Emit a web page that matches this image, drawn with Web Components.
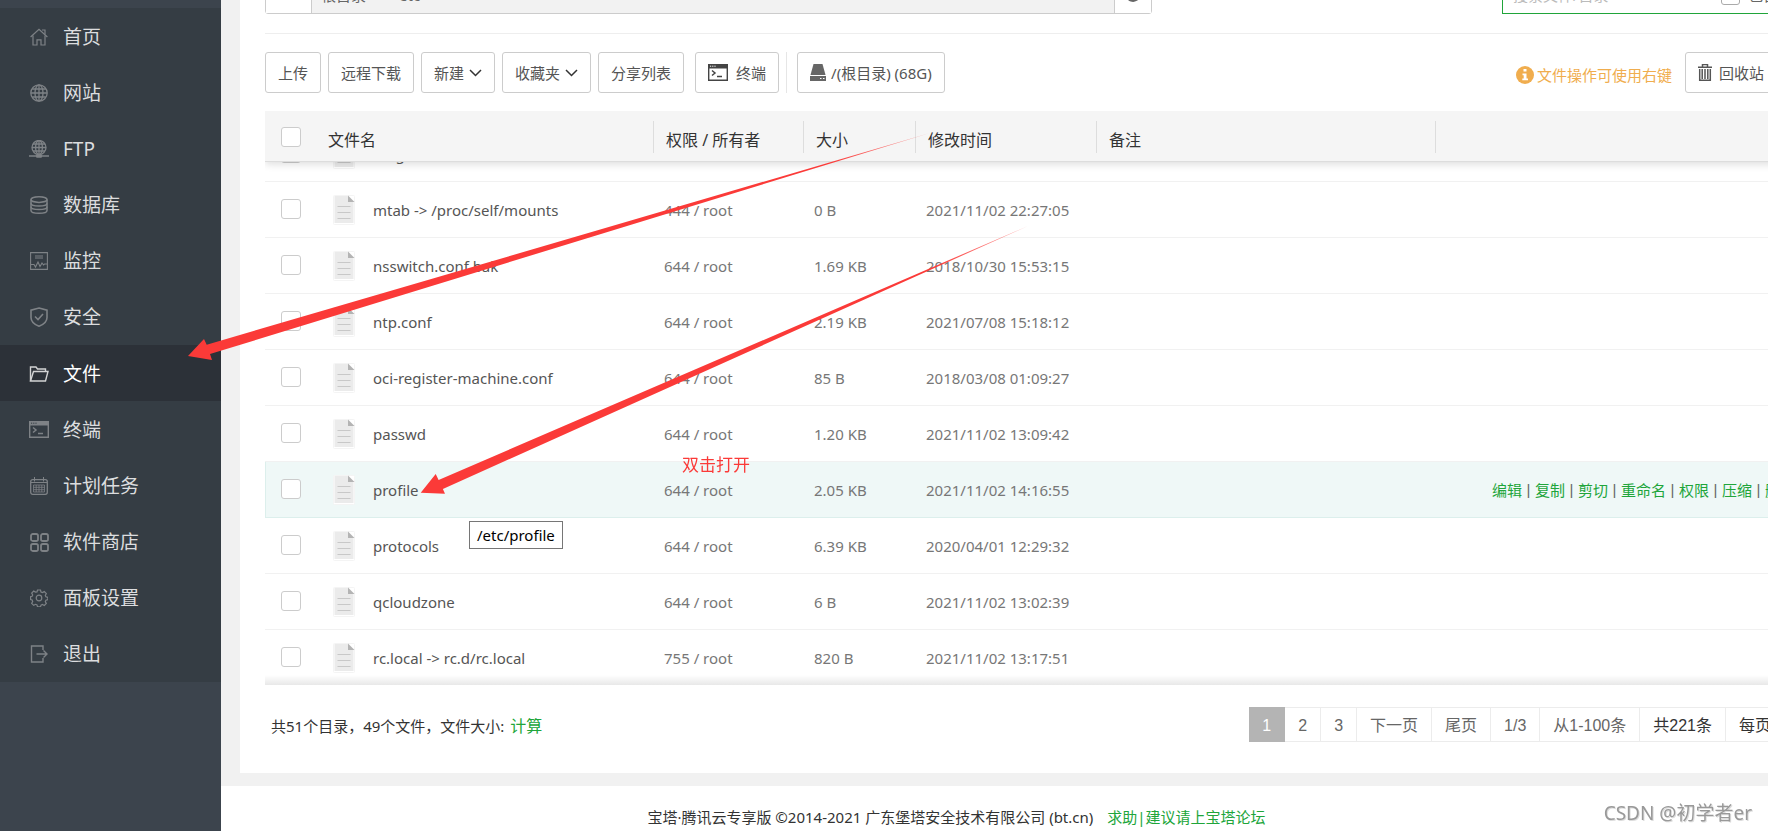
<!DOCTYPE html>
<html lang="zh-CN">
<head>
<meta charset="utf-8">
<title>宝塔面板 - 文件</title>
<style>
  html, body { margin: 0; padding: 0; }
  body {
    overflow: hidden;
    background: #fff;
    color: #333;
    font-family: "Noto Sans", "Noto Sans CJK SC", sans-serif;
    font-size: 15px;
    line-height: 20px;
  }
</style>
</head>
<body>
<panel-app></panel-app>

<script>
const define = (name, html, setup) => {
  const template = document.createElement('template');
  template.innerHTML = html;
  customElements.define(name, class extends HTMLElement {
    constructor() {
      super();
      this.attachShadow({ mode: 'open' }).append(template.content.cloneNode(true));
    }
    connectedCallback() { if (setup) setup(this, this.shadowRoot); }
  });
};

/* Icons */
const icons = {
  home: ['0 0 18 18', '<g fill="none" stroke="currentColor" stroke-width="1.2"><path d="M.6 9 9 1.2 17.4 9"/><path d="M3 7.6V17h4v-5.2h4V17h4V7.6M12 2h3v4.4"/></g>'],
  globe: ['0 0 18 18', '<g fill="none" stroke="currentColor" stroke-width="1.3"><circle cx="9" cy="9" r="8.2"/><ellipse cx="9" cy="9" rx="4" ry="8.2"/><path d="M9 1v16M1 9h16M2.2 5h13.6M2.2 13h13.6"/></g>'],
  ftp: ['0 0 20 18', '<g fill="none" stroke="currentColor" stroke-width="1.3"><circle cx="10" cy="7.5" r="7"/><ellipse cx="10" cy="7.5" rx="3.4" ry="7"/><path d="M10 .5v14M3 7.5h14M4 4h12M4 11h12M0 16h20"/></g><rect x="7" y="14.4" width="6" height="3.4" rx="1" fill="currentColor"/>'],
  database: ['0 0 18 18', '<g fill="none" stroke="currentColor" stroke-width="1.5"><ellipse cx="9" cy="3.6" rx="8" ry="2.8"/><path d="M1 3.6v10.8c0 1.6 3.6 2.8 8 2.8s8-1.2 8-2.8V3.6"/><path d="M1 7.2C1 8.8 4.6 10 9 10s8-1.2 8-2.8M1 10.8c0 1.6 3.6 2.8 8 2.8s8-1.2 8-2.8"/></g>'],
  monitor: ['0 0 18 18', '<g fill="none" stroke="currentColor" stroke-width="1.1"><path d="M.6.6h16.8v16.8H.6zM5 4h8M5 6h8M1 12.500h3l1.500 2.500 2.500-5 2 4.500 2-3.500 1.500 2 1-1h2.500"/></g>'],
  shield: ['0 0 18 20', '<g fill="none" stroke="currentColor" stroke-width="1.6"><path d="M9 1 17 3.200v7.300c0 4-3.500 7-8 8.700-4.500-1.700-8-4.700-8-8.700V3.200z"/><path d="m5 9.500 3 3L13 7"/></g>'],
  folder: ['0 0 20 16', '<g fill="none" stroke="currentColor" stroke-width="1.4"><path d="M1.500 15V1h5.500l1.500 2h8v2.500"/><path d="M1.500 15 4.500 5.500h14.500L16.500 15z"/></g>'],
  terminal: ['0 0 20 17', '<path d="M0 0h20v4.500H0z" fill="currentColor"/><path d="M.7.7h18.6v15.6H.7z" fill="none" stroke="currentColor" stroke-width="1.400"/><path d="m4 6.500 3 2.500-3 2.500M9 12.500h5" fill="none" stroke="currentColor" stroke-width="1.500"/><path d="M2 2.200h1.200M4.200 2.200h1.200M6.400 2.200h1.200" stroke="var(--dots, #353d44)"/>'],
  calendar: ['0 0 18 18', '<g fill="none" stroke="currentColor"><rect x=".7" y="2.700" width="16.600" height="14.600" rx="2" stroke-width="1.300"/><path d="M4.500 0v4.500M13.500 0v4.500M1 5.500h16"/><path d="M3.500 8h11v7h-11zM3.500 10.300h11M3.500 12.700h11M6.200 8v7M9 8v7M11.800 8v7" stroke-width=".8"/></g>'],
  apps: ['0 0 19 19', '<g fill="none" stroke="currentColor" stroke-width="1.800"><rect x="1" y="1" width="7" height="7" rx="1.800"/><rect x="11" y="1" width="7" height="7" rx="1.800"/><rect x="1" y="11" width="7" height="7" rx="1.800"/><rect x="11" y="11" width="7" height="7" rx="1.800"/></g>'],
  gear: ['0 0 18 18', '<g fill="none" stroke="currentColor" stroke-width="1.200"><path d="m7.500 1h3l.5 2 1.400.6 1.900-1 2 2-1 1.900.6 1.300 2 .5v2.400l-2 .5-.6 1.400 1 1.900-2 2-1.900-1-1.400.6-.5 1.700h-3L7 15.900l-1.400-.6-1.900 1-2-2 1-1.900-.6-1.400-1.500-.5V7.800l1.500-.5.6-1.300-1-1.900 2-2 1.900 1L7 3z"/><circle cx="9" cy="9" r="2.800"/></g>'],
  logout: ['0 0 18 18', '<g fill="none" stroke="currentColor" stroke-width="1.400"><path d="M13 5V1H1.500v16H13v-4M6.500 9h10.500M13.500 5.500 17 9l-3.500 3.500"/></g>'],
  chevron: ['0 0 13 8', '<path d="m1 1 5.500 5.500L12 1" fill="none" stroke="#333" stroke-width="1.500"/>'],
  disk: ['0 0 16 17', '<path d="M3.500 0h9L15.500 11H.5z" fill="currentColor"/><path d="M0 12h16v5H0z" fill="currentColor"/><path d="M10 14.500h1.500M13 14.500h1.500" stroke="#fff"/>'],
  trash: ['0 0 14 17', '<path d="M4.500 2.500v-2h5v2M0 3.200h14" fill="none" stroke="currentColor" stroke-width="1.500"/><path d="M1.700 5v11.300h10.600V5M4.200 5v10M7 5v10M9.800 5v10" fill="none" stroke="currentColor" stroke-width="1.500"/>'],
  info: ['0 0 18 18', '<circle cx="9" cy="9" r="9" fill="currentColor"/><path d="M7.500 3h3v2.500h-3zM6.500 7.500h4v5H12v1.800H6.300v-1.800h1.400V9.300H6.500z" fill="#fff"/>'],
  refresh: ['0 0 16 16', '<path d="M14 8.500A6 6 0 1 1 12.500 4M13 .5V5H8.500" fill="none" stroke="currentColor" stroke-width="2"/>'],
  back: ['0 0 16 10', '<path d="M15 5H2M6 1 2 5l4 4" fill="none" stroke="currentColor" stroke-width="2"/>'],
  grid: ['0 0 16 16', '<path d="M1 1h5v5H1zM10 1h5v5h-5zM1 10h5v5H1zM10 10h5v5h-5z" fill="currentColor"/>'],
  rows: ['0 0 16 16', '<path d="M1 3h14M1 8h14M1 13h14" stroke="currentColor" stroke-width="2"/>'],
  file: ['0 0 22 30', '<rect x=".5" y=".5" width="21" height="29" rx="1" fill="#fff" stroke="#f4f4f4"/><path d="M1.500 1H15v6h5.500v21h-19z" fill="#ebebeb"/><path d="M15 .5 21.500 7H15z" fill="#b4b4b4"/><path d="M4.500 11.500h13M4.500 17.500h13M4.500 23.500h13" stroke="#c8c8c8" stroke-width="1.200"/>']
};
define('ui-icon', '<style>:host{display:inline-flex;flex:none}svg{display:block}</style><svg aria-hidden="true"></svg>', (el, root) => {
  const [box, body] = icons[el.getAttribute('name')];
  const [, , w, h] = box.split(' ');
  const svg = root.querySelector('svg');
  svg.setAttribute('viewBox', box);
  svg.setAttribute('width', w);
  svg.setAttribute('height', h);
  svg.innerHTML = body;
});

/* Sidebar */
define('nav-item', `
  <style>
    :host { display: block; color: #dcdddf; --tint: #7e8286; }
    :host([active]) { background: #2c3138; color: #fff; --tint: #d2d3d4; }
    a { display: flex; align-items: center; height: 100%; box-sizing: border-box; padding: 1px 0 0 29px; color: inherit; text-decoration: none; font-size: 19px; line-height: 26px; }
    .icon { display: flex; justify-content: center; width: 20px; margin-right: 14px; color: var(--tint); }
  </style>
  <a href="#"><span class="icon"></span><slot></slot></a>`,
  (el, root) => {
    const icon = document.createElement('ui-icon');
    icon.setAttribute('name', el.getAttribute('icon'));
    root.querySelector('.icon').replaceChildren(icon);
  });

define('side-nav', `
  <style>
    :host { display: block; width: 221px; flex: none; padding-top: 8px; box-sizing: border-box; background: #3c444d; }
    nav { display: grid; grid-auto-rows: 1fr; height: 674px; background: #353d44; }
  </style>
  <nav>
    <nav-item icon="home">首页</nav-item>
    <nav-item icon="globe">网站</nav-item>
    <nav-item icon="ftp">FTP</nav-item>
    <nav-item icon="database">数据库</nav-item>
    <nav-item icon="monitor">监控</nav-item>
    <nav-item icon="shield">安全</nav-item>
    <nav-item icon="folder" active>文件</nav-item>
    <nav-item icon="terminal">终端</nav-item>
    <nav-item icon="calendar">计划任务</nav-item>
    <nav-item icon="apps">软件商店</nav-item>
    <nav-item icon="gear">面板设置</nav-item>
    <nav-item icon="logout">退出</nav-item>
  </nav>`);

/* Path and search */
define('path-bar', `
  <style>
    :host { display: flex; justify-content: space-between; padding-bottom: 19px; border-bottom: 1px solid #eee; }
    .path { display: flex; width: 887px; height: 38px; box-sizing: border-box; border: 1px solid #ccc; border-radius: 3px; color: #666; }
    button { display: flex; align-items: center; justify-content: center; padding: 0; border: 0; background: #fff; color: #666; }
    .back { width: 46px; border-right: 1px solid #ccc; }
    .reload { width: 37px; border-left: 1px solid #ccc; }
    .crumbs { flex: 1; display: flex; align-items: center; gap: 33px; padding-left: 9px; background: #f2f2f2; }
    a { color: inherit; text-decoration: none; }
    .search { display: flex; align-items: center; width: 366px; height: 38px; box-sizing: border-box; padding-left: 10px; border: 1px solid #20a53a; }
    .search input[type=text] { width: 208px; padding: 0; border: 0; outline: 0; font: inherit; }
    ::placeholder { color: #bbb; }
    label { display: flex; align-items: center; gap: 8px; color: #666; }
    .tick { appearance: none; width: 19px; height: 19px; margin: 0; border: 1px solid #aaa; border-radius: 3px; }
  </style>
  <div class="path">
    <button class="back" aria-label="返回"><ui-icon name="back"></ui-icon></button>
    <div class="crumbs"><a href="#">根目录</a><a href="#">etc</a></div>
    <button class="reload" aria-label="刷新"><ui-icon name="refresh"></ui-icon></button>
  </div>
  <div class="search">
    <input type="text" placeholder="搜索文件/目录" aria-label="搜索文件/目录">
    <label><input class="tick" type="checkbox">包含子目录</label>
  </div>`);

/* Toolbar */
define('tool-button', `
  <style>
    :host { display: block; }
    button { display: flex; align-items: center; gap: var(--gap, 5px); height: 41px; padding: 0 12px; border: 1px solid #ccc; border-radius: 3px; background: #fff; color: #555; font: inherit; white-space: nowrap; --dots: #fff; }
    ::slotted([name=terminal]) { color: #444; }
    ::slotted([name=disk]) { color: #666; }
  </style>
  <button><slot></slot></button>`);

define('tool-bar', `
  <style>
    :host { display: flex; align-items: center; gap: 7px; padding: 18px 0; }
    .mark { width: 1px; height: 41px; background: #e6e6e6; margin-right: 3px; }
    .term { margin-left: 4px; --gap: 8px; }
    .hint { display: flex; align-items: center; gap: 3px; margin-left: auto; margin-right: 6px; padding-top: 4px; color: #f0ad4e; }
    .bin { --gap: 7px; }
    .view { display: flex; }
  </style>
  <tool-button>上传</tool-button>
  <tool-button>远程下载</tool-button>
  <tool-button>新建<ui-icon name="chevron"></ui-icon></tool-button>
  <tool-button>收藏夹<ui-icon name="chevron"></ui-icon></tool-button>
  <tool-button>分享列表</tool-button>
  <tool-button class="term"><ui-icon name="terminal"></ui-icon>终端</tool-button>
  <span class="mark"></span>
  <tool-button><ui-icon name="disk"></ui-icon>/(根目录) (68G)</tool-button>
  <span class="hint"><ui-icon name="info"></ui-icon>文件操作可使用右键</span>
  <tool-button class="bin"><ui-icon name="trash"></ui-icon>回收站</tool-button>
  <div class="view"><tool-button><ui-icon name="grid"></ui-icon></tool-button><tool-button><ui-icon name="rows"></ui-icon></tool-button></div>`);

/* File table */
const files = [
  ['magic', '', '', ''],
  ['mtab -> /proc/self/mounts', '444 / root', '0 B', '2021/11/02 22:27:05'],
  ['nsswitch.conf.bak', '644 / root', '1.69 KB', '2018/10/30 15:53:15'],
  ['ntp.conf', '644 / root', '2.19 KB', '2021/07/08 15:18:12'],
  ['oci-register-machine.conf', '644 / root', '85 B', '2018/03/08 01:09:27'],
  ['passwd', '644 / root', '1.20 KB', '2021/11/02 13:09:42'],
  ['profile', '644 / root', '2.05 KB', '2021/11/02 14:16:55'],
  ['protocols', '644 / root', '6.39 KB', '2020/04/01 12:29:32'],
  ['qcloudzone', '644 / root', '6 B', '2021/11/02 13:02:39'],
  ['rc.local -> rc.d/rc.local', '755 / root', '820 B', '2021/11/02 13:17:51']
];
const actions = ['编辑', '复制', '剪切', '重命名', '权限', '压缩', '删除'];

define('file-list', `
  <style>
    :host { display: block; position: relative; isolation: isolate; }
    .view { height: 574px; overflow: hidden; }
    table { width: 100%; table-layout: fixed; border-collapse: separate; border-spacing: 0; }
    thead { position: sticky; top: 0; z-index: 1; box-shadow: 0 2px 8px rgba(0, 0, 0, .14); }
    th { height: 50px; padding: 0 0 0 13px; border-bottom: 1px solid #ddd; background: #f5f5f5; font-size: 16px; font-weight: normal; text-align: left; }
    th.split { background: linear-gradient(#ddd, #ddd) 0 10px / 1px 32px no-repeat #f5f5f5; }
    th span { display: block; padding-top: 8px; }
    td { height: 55px; padding: 0 0 0 11px; border-bottom: 1px solid #f1f1f1; color: #777; white-space: nowrap; }
    .check { padding: 0 0 0 16px; }
    td.check { padding-bottom: 2px; height: 53px; }
    th.check { padding-top: 2px; height: 48px; }
    .check input { display: block; appearance: none; width: 20px; height: 20px; margin: 0; box-sizing: border-box; border: 1px solid #ccc; border-radius: 3px; background: #fff; }
    .name { display: flex; align-items: center; gap: 18px; padding-left: 7px; color: #555; }
    .hover td { background: #eff8f7; border-color: #dcefec; }
    .hover .check { box-shadow: inset 1px 0 #dcefec; }
    .acts { display: flex; justify-content: flex-end; gap: 4px; padding-right: 73px; color: #666; }
    .acts span { width: 5px; font-family: "Liberation Sans", sans-serif; text-align: center; }
    .acts a { color: #20a53a; text-decoration: none; }
    .shade { position: absolute; inset: auto 0 0 0; height: 10px; background: linear-gradient(transparent, rgba(0, 0, 0, .09)); }
  </style>
  <div class="view">
    <table>
      <colgroup><col style="width:50px"><col style="width:338px"><col style="width:150px"><col style="width:112px"><col style="width:181px"><col style="width:339px"><col></colgroup>
      <thead><tr>
        <th class="check"><input type="checkbox" aria-label="全选"></th>
        <th><span>文件名</span></th>
        <th class="split"><span>权限 / 所有者</span></th>
        <th class="split"><span>大小</span></th>
        <th class="split"><span>修改时间</span></th>
        <th class="split"><span>备注</span></th>
        <th class="split"></th>
      </tr></thead>
      <tbody></tbody>
    </table>
  </div>
  <div class="shade"></div>`,
  (el, root) => {
    root.querySelector('tbody').innerHTML = files.map(([name, owner, size, time]) => {
      const open = name === 'profile';
      const acts = open ? '<div class="acts">' + actions.map(a => `<a href="#">${a}</a>`).join('<span>|</span>') + '</div>' : '';
      const label = name.replace('>', '&gt;');
      return `<tr class="${open ? 'hover' : ''}"><td class="check"><input type="checkbox" aria-label="${label}"></td>
        <td><div class="name"><ui-icon name="file"></ui-icon>${label}</div></td>
        <td>${owner}</td><td>${size}</td><td>${time}</td><td></td><td>${acts}</td></tr>`;
    }).join('');
    root.querySelector('.view').scrollTop = 36;
  });

/* Status line and pager */
define('list-footer', `
  <style>
    :host { display: flex; align-items: center; justify-content: space-between; padding: 22px 0 31px 6px; }
    a { color: #20a53a; text-decoration: none; }
    .sum { padding-top: 2px; }
    .sum a { margin-left: 6px; font-size: 16px; }
    .pager { display: flex; border: 1px solid #ececec; border-right: 0; font: 16px/31px "Liberation Sans", "Noto Sans CJK SC", sans-serif; }
    .pager > * { padding: 2px 13px 0; border-right: 1px solid #ececec; color: #666; white-space: nowrap; }
    .pager .on { margin: -1px 0 -1px -1px; padding: 3px 13px 1px; border-color: #b4b4b4; background: #b4b4b4; color: #fff; }
    .pager .dark { color: #333; }
    select { width: 79px; height: 24px; margin: 0 0 0 4px; border: 1px solid #ccc; background: #fff; }
  </style>
  <div class="sum">共51个目录，49个文件，文件大小:<a href="#">计算</a></div>
  <div class="pager">
    <span class="on">1</span><a href="#">2</a><a href="#">3</a><a href="#">下一页</a><a href="#">尾页</a><span>1/3</span><span>从1-100条</span><span class="dark">共221条</span><label class="dark">每页<select><option>100</option></select></label>
  </div>`);

/* Page footer */
define('site-footer', `
  <style>
    :host { display: flex; justify-content: center; gap: 14px; padding: 21px 76px 4px 0; background: #fff; }
    a { color: #20a53a; text-decoration: none; }
  </style>
  <span>宝塔·腾讯云专享版 ©2014-2021 广东堡塔安全技术有限公司 (bt.cn)</span>
  <a href="#">求助|建议请上宝塔论坛</a>`);

/* Arrows, notes and watermark lying over the page */
define('page-notes', `
  <style>
    :host { position: absolute; inset: 0; z-index: 2; overflow: hidden; pointer-events: none; }
    svg { position: absolute; left: 0; top: 0; }
    .note { position: absolute; left: 682px; top: 453px; color: #fb3a38; font-size: 17px; line-height: 24px; }
    .tip { position: absolute; left: 469px; top: 521px; padding: 3px 7px; border: 1px solid #767676; background: #fff; color: #000; }
    .mark { position: absolute; right: 16px; bottom: 5px; color: #999; font-size: 19px; line-height: 26px; text-shadow: 1px 1px #ddd; }
  </style>
  <svg width="1100" height="520" aria-hidden="true">
    <defs>
      <linearGradient id="a" gradientUnits="userSpaceOnUse" x1="925" y1="134" x2="830" y2="162"><stop stop-color="#fb3a38" stop-opacity=".5"/><stop offset="1" stop-color="#fb3a38"/></linearGradient>
      <linearGradient id="b" gradientUnits="userSpaceOnUse" x1="1022" y1="228" x2="930" y2="270"><stop stop-color="#fb3a38" stop-opacity=".5"/><stop offset="1" stop-color="#fb3a38"/></linearGradient>
    </defs>
    <path fill="url(#a)" d="M930 133 206.700 344.700 204 339 188 356l24 4-2-6z"/>
    <path fill="url(#b)" d="M1028 226 438.600 480l-2.900-6-15 18.700 24.300 1-2.100-4.700z"/>
  </svg>
  <span class="note">双击打开</span>
  <span class="tip" role="tooltip">/etc/profile</span>
  <span class="mark">CSDN @初学者er</span>`);

define('panel-app', `
  <style>
    :host { display: flex; position: relative; min-height: 100vh; overflow: hidden; }
    main { flex: 1; display: flex; flex-direction: column; min-width: 0; overflow: hidden; background: #f1f1f1; }
    .panel { margin: 0 -100px 13px 19px; padding-left: 25px; background: #fff; }
    path-bar { margin-top: -24px; }
    site-footer { flex: 1; }
  </style>
  <side-nav></side-nav>
  <main>
    <div class="panel">
      <path-bar></path-bar>
      <tool-bar></tool-bar>
      <file-list></file-list>
      <list-footer></list-footer>
    </div>
    <site-footer></site-footer>
  </main>
  <page-notes></page-notes>`);
</script>
</body>
</html>
